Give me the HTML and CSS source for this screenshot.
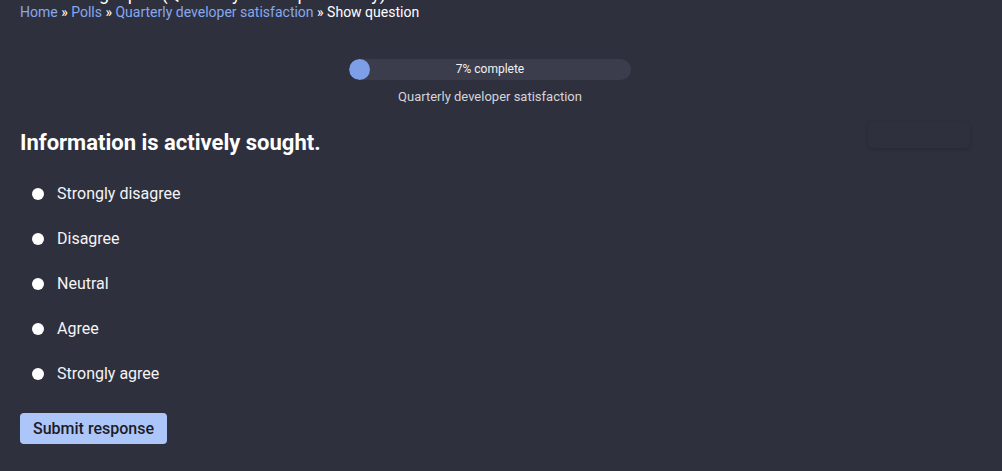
FILE: index.html
```html
<!DOCTYPE html>
<html>
<head>
<meta charset="utf-8">
<link rel="stylesheet" href="styles.css">
</head>
<body>
<div class="page">
  <div class="cut"><div class="cut-title">Taking a poll (Quarterly developer survey)</div></div>
  <nav class="crumbs"><a href="#">Home</a> » <a href="#">Polls</a> » <a href="#">Quarterly developer satisfaction</a> » <span>Show question</span></nav>
  <div class="progress-wrap">
    <div class="progress">
      <div class="fill" style="width:21px"></div>
      <div class="ptext">7% complete</div>
    </div>
    <div class="poll-name">Quarterly developer satisfaction</div>
  </div>
  <div class="qrow">
    <h1 class="question">Information is actively sought.</h1>
    <div class="side-card"></div>
  </div>
  <form class="options">
    <label class="opt"><input type="radio" name="a"><span>Strongly disagree</span></label>
    <label class="opt"><input type="radio" name="a"><span>Disagree</span></label>
    <label class="opt"><input type="radio" name="a"><span>Neutral</span></label>
    <label class="opt"><input type="radio" name="a"><span>Agree</span></label>
    <label class="opt"><input type="radio" name="a"><span>Strongly agree</span></label>
    <button type="button" class="submit">Submit response</button>
  </form>
</div>
</body>
</html>
```
FILE: styles.css
```css
html, body {
  margin: 0;
  padding: 0;
  background: #2f303e;
  height: 100%;
  overflow: hidden;
}
body {
  font-family: Roboto, "Liberation Sans", sans-serif;
  color: #ffffff;
}
.page {
  padding: 0 20px;
}
.cut {
  height: 4px;
  overflow: hidden;
}
.cut-title {
  font-size: 18px;
  line-height: 18px;
  margin-top: -15px;
  padding-left: 36px;
  color: #ffffff;
  white-space: nowrap;
}
.crumbs {
  font-size: 14px;
  line-height: 16px;
  color: #ffffff;
}
.crumbs a {
  color: #86a8ee;
  text-decoration: none;
}
.progress-wrap {
  display: flex;
  flex-direction: column;
  align-items: center;
  margin-top: 39px;
  margin-right: 22px;
}
.progress {
  position: relative;
  width: 282px;
  height: 21px;
  border-radius: 11px;
  background: #3b3d4d;
  overflow: hidden;
}
.fill {
  height: 21px;
  border-radius: 11px;
  background: #7c9fe8;
}
.ptext {
  position: absolute;
  inset: 0;
  text-align: center;
  font-size: 12px;
  line-height: 21px;
  color: #f2f2f2;
}
.poll-name {
  margin-top: 8px;
  font-size: 13px;
  line-height: 17px;
  color: #d4d4da;
}
.qrow {
  display: flex;
  justify-content: space-between;
  align-items: flex-start;
  margin-top: 24px;
}
.question {
  margin: 0;
  font-size: 22px;
  line-height: 28px;
  font-weight: 700;
}
.side-card {
  width: 102px;
  height: 26px;
  margin-top: -7px;
  margin-right: 12px;
  border-radius: 5px;
  background: #2f303e;
  box-shadow: 0 1px 4px rgba(0, 0, 0, 0.18);
}
.options {
  display: flex;
  flex-direction: column;
  align-items: flex-start;
  margin-top: 14px;
}
.opt {
  display: flex;
  align-items: center;
  height: 45px;
  font-size: 16px;
  color: #f4f4f6;
}
.opt input {
  appearance: none;
  -webkit-appearance: none;
  width: 12px;
  height: 12px;
  border-radius: 50%;
  background: #ffffff;
  margin: 0 13px 0 12px;
}
.submit {
  margin-top: 17px;
  background: #adc6fa;
  border: none;
  border-radius: 4px;
  padding: 0 13px;
  height: 31px;
  font-family: Roboto, "Liberation Sans", sans-serif;
  font-size: 16px;
  font-weight: 500;
  color: #1b1c26;
}
```
